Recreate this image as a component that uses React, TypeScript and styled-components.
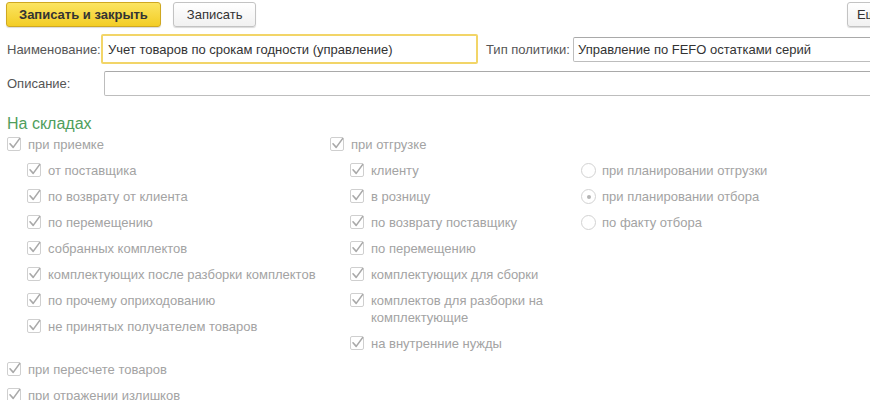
import React from "react";
import styled, { createGlobalStyle } from "styled-components";

const Global = createGlobalStyle`
  html, body { margin: 0; padding: 0; background: #fff; overflow: hidden; }
  body { font-family: "Liberation Sans", Arial, sans-serif; font-size: 13px; }
`;

const Page = styled.div`
  width: 897px;
  padding: 2px 5px 0 7px;
  display: flex;
  flex-direction: column;
`;

const Toolbar = styled.div`
  display: flex;
  align-items: center;
  gap: 12px;
  margin-left: -1px;
`;

const Button = styled.button<{ $primary?: boolean }>`
  height: 25px;
  padding: 0 ${(p) => (p.$primary ? 12 : 13)}px;
  font-family: inherit;
  font-size: 13px;
  font-weight: ${(p) => (p.$primary ? 700 : 400)};
  color: #333;
  border-radius: 3px;
  border: 1px solid ${(p) => (p.$primary ? "#cfa821" : "#c3c3c3")};
  background: ${(p) =>
    p.$primary
      ? "linear-gradient(#fbe462, #f3cd25)"
      : "linear-gradient(#ffffff, #f1f1f1)"};
  box-shadow: 0 1px 1px rgba(0, 0, 0, 0.15);
  white-space: nowrap;
`;

const Spacer = styled.div`
  flex: 1;
`;

const FieldRow = styled.div<{ $mt: number }>`
  display: flex;
  align-items: center;
  margin-top: ${(p) => p.$mt}px;
`;

const Label = styled.div<{ $w: number; $ml?: number }>`
  width: ${(p) => p.$w}px;
  margin-left: ${(p) => p.$ml ?? 0}px;
  flex: none;
  color: #555;
  white-space: nowrap;
`;

const Input = styled.div<{ $focused?: boolean; $w?: number }>`
  box-sizing: border-box;
  ${(p) => (p.$w ? `width: ${p.$w}px; flex: none;` : "flex: 1;")}
  height: ${(p) => (p.$focused ? 30 : 25)}px;
  display: flex;
  align-items: center;
  padding-left: ${(p) => (p.$focused ? 5 : 4)}px;
  border: ${(p) => (p.$focused ? "2px solid #f2d568" : "1px solid #bdbdbd")};
  border-top-color: ${(p) => (p.$focused ? "#f2d568" : "#a9a9a9")};
  border-radius: 2px;
  color: #333;
  white-space: nowrap;
  overflow: hidden;
`;

const SectionTitle = styled.div`
  margin-top: 19px;
  font-size: 16px;
  line-height: 17px;
  color: #4f9e5c;
`;

const Columns = styled.div`
  display: flex;
  align-items: flex-start;
`;

const Column = styled.div<{ $w?: number; $pt?: number }>`
  ${(p) => (p.$w ? `width: ${p.$w}px; flex: none;` : "flex: 1;")}
  padding-top: ${(p) => p.$pt ?? 0}px;
  display: flex;
  flex-direction: column;
`;

const Indent = styled.div`
  padding-left: 20px;
  display: flex;
  flex-direction: column;
`;

const OptionRow = styled.div`
  display: flex;
  align-items: flex-start;
  gap: 7px;
  padding: 4px 0 5px;
  line-height: 17px;
  color: #a3a3a3;
  white-space: nowrap;
`;

const RadioRow = styled(OptionRow)`
  gap: 6px;
`;

const BoxWrap = styled.span`
  flex: none;
  width: 14px;
  height: 14px;
  margin-top: 1px;
  display: inline-flex;
  svg { overflow: visible; }
`;

const Radio = styled.span<{ $on?: boolean }>`
  flex: none;
  box-sizing: border-box;
  width: 15px;
  height: 15px;
  margin-top: 1px;
  border-radius: 50%;
  border: 1px solid #d2d2d2;
  background: #fff;
  display: flex;
  align-items: center;
  justify-content: center;
  &::after {
    content: "";
    display: ${(p) => (p.$on ? "block" : "none")};
    width: 4px;
    height: 4px;
    border-radius: 50%;
    background: #b4b4b4;
  }
`;

const Check = () => (
  <BoxWrap>
    <svg width="14" height="14" viewBox="0 0 14 14">
      <rect x="0.5" y="0.5" width="13" height="13" rx="1.5" fill="#fff" stroke="#cfcfcf" />
      <path d="M3 6.8 L6.2 10.4 L12.6 1.6" fill="none" stroke="#a9a9a9" strokeWidth="1.6" strokeLinecap="round" strokeLinejoin="round" />
    </svg>
  </BoxWrap>
);

const CheckItem = ({ children }: { children: React.ReactNode }) => (
  <OptionRow>
    <Check />
    <span>{children}</span>
  </OptionRow>
);

const RadioItem = ({ on, children }: { on?: boolean; children: React.ReactNode }) => (
  <RadioRow>
    <Radio $on={on} />
    <span>{children}</span>
  </RadioRow>
);

export default function App() {
  return (
    <>
      <Global />
      <Page>
        <Toolbar>
          <Button $primary>Записать и закрыть</Button>
          <Button>Записать</Button>
          <Spacer />
          <Button style={{ padding: "0 9px" }}>Еще ▾</Button>
        </Toolbar>

        <FieldRow $mt={7}>
          <Label $w={94}>Наименование:</Label>
          <Input $focused $w={377}>Учет товаров по срокам годности (управление)</Input>
          <Label $w={87} $ml={8}>Тип политики:</Label>
          <Input>Управление по FEFO остатками серий</Input>
        </FieldRow>

        <FieldRow $mt={7}>
          <Label $w={97}>Описание:</Label>
          <Input />
        </FieldRow>

        <SectionTitle>На складах</SectionTitle>

        <Columns>
          <Column $w={323}>
            <CheckItem>при приемке</CheckItem>
            <Indent>
              <CheckItem>от поставщика</CheckItem>
              <CheckItem>по возврату от клиента</CheckItem>
              <CheckItem>по перемещению</CheckItem>
              <CheckItem>собранных комплектов</CheckItem>
              <CheckItem>комплектующих после разборки комплектов</CheckItem>
              <CheckItem>по прочему оприходованию</CheckItem>
              <CheckItem>не принятых получателем товаров</CheckItem>
            </Indent>
          </Column>
          <Column $w={251}>
            <CheckItem>при отгрузке</CheckItem>
            <Indent>
              <CheckItem>клиенту</CheckItem>
              <CheckItem>в розницу</CheckItem>
              <CheckItem>по возврату поставщику</CheckItem>
              <CheckItem>по перемещению</CheckItem>
              <CheckItem>комплектующих для сборки</CheckItem>
              <CheckItem>
                комплектов для разборки на
                <br />
                комплектующие
              </CheckItem>
              <CheckItem>на внутренние нужды</CheckItem>
            </Indent>
          </Column>
          <Column $pt={26}>
            <RadioItem>при планировании отгрузки</RadioItem>
            <RadioItem on>при планировании отбора</RadioItem>
            <RadioItem>по факту отбора</RadioItem>
          </Column>
        </Columns>

        <CheckItem>при пересчете товаров</CheckItem>
        <CheckItem>при отражении излишков</CheckItem>
      </Page>
    </>
  );
}
